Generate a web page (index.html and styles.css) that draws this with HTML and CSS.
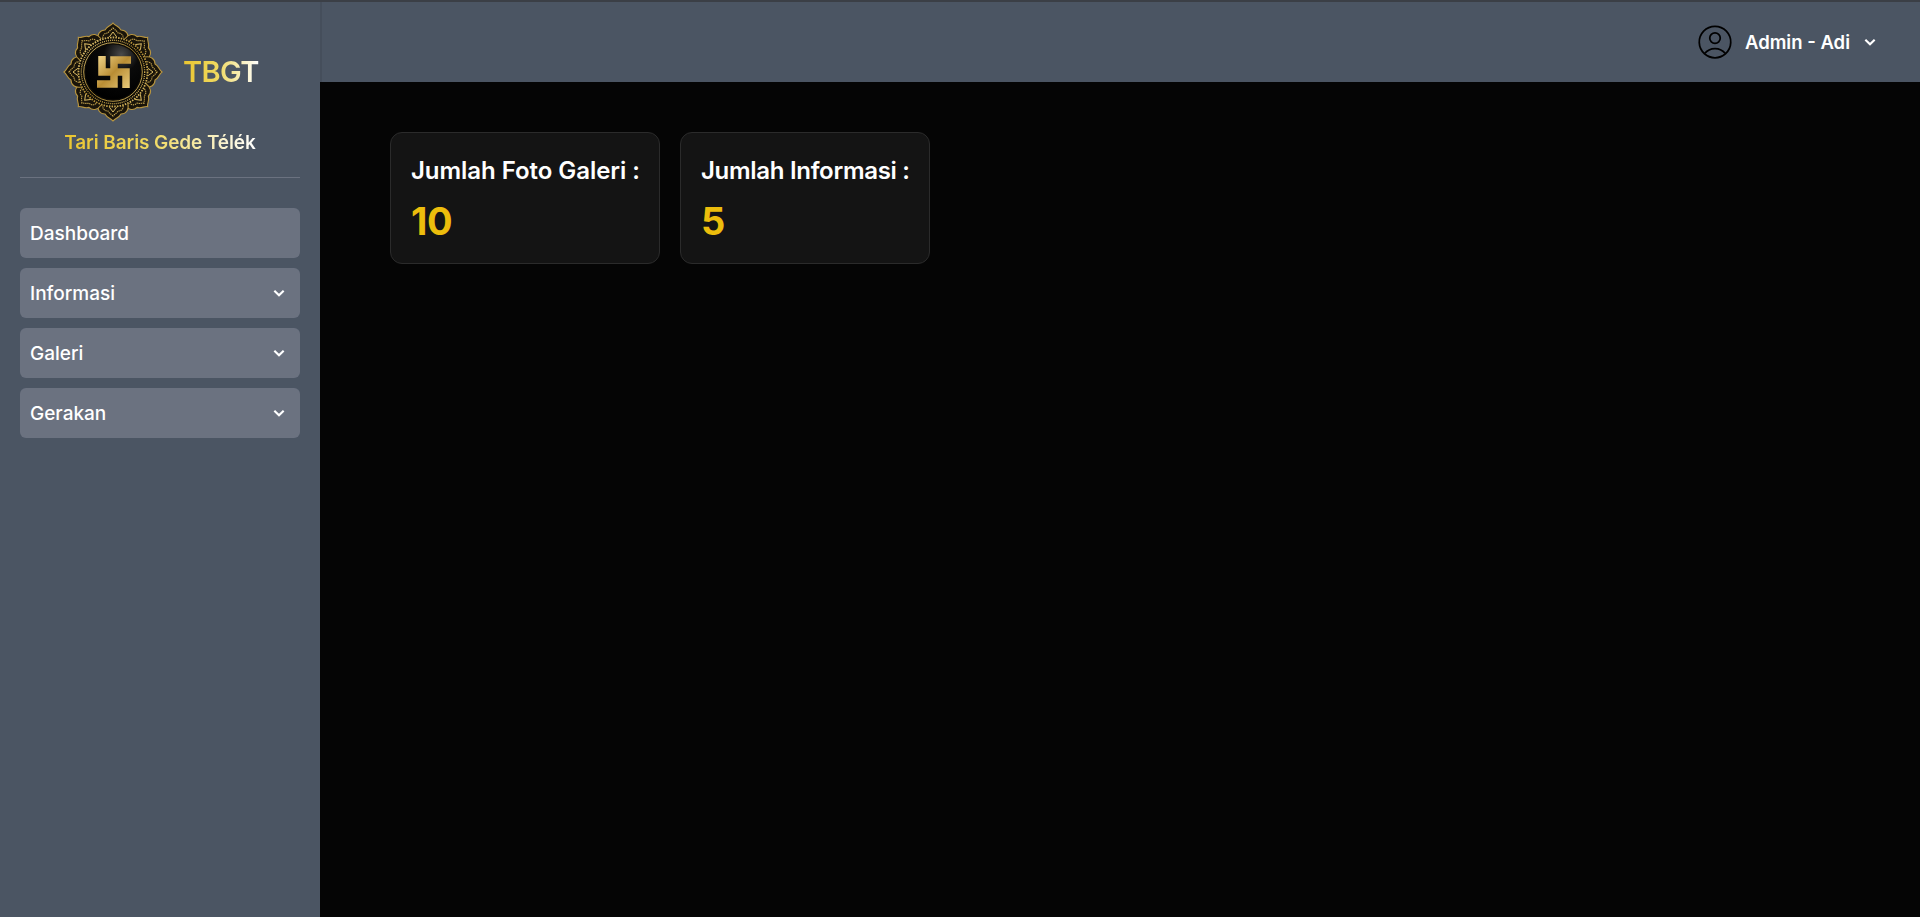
FILE: index.html
```html
<!DOCTYPE html>
<html lang="id">
<head>
<meta charset="utf-8">
<title>TBGT Admin</title>
<link rel="stylesheet" href="styles.css">
</head>
<body>
<div class="app">
  <aside class="sidebar">
    <div class="brand">
      <div class="brand-top">
        <svg class="logo" viewBox="0 0 100 100" aria-hidden="true">
          <defs>
            <linearGradient id="gold" x1="0" y1="0" x2="1" y2="1">
              <stop offset="0" stop-color="#e9cf7e"/>
              <stop offset="0.5" stop-color="#a9842f"/>
              <stop offset="1" stop-color="#e0c26a"/>
            </linearGradient>
            <linearGradient id="sw" gradientUnits="userSpaceOnUse" x1="35" y1="34" x2="67" y2="66">
              <stop offset="0" stop-color="#f0d488"/>
              <stop offset="0.5" stop-color="#b98d34"/>
              <stop offset="1" stop-color="#e8cb7c"/>
            </linearGradient>
            <radialGradient id="disc" cx="0.65" cy="0.18" r="0.8">
              <stop offset="0" stop-color="#4a4a4a"/>
              <stop offset="0.4" stop-color="#0a0a0a"/>
              <stop offset="1" stop-color="#000"/>
            </radialGradient>
            <g id="petal">
              <path d="M50 1 C52 4 56 4 58 8 C63 8 66 12 65 18 L50 32 L35 18 C34 12 37 8 42 8 C44 4 48 4 50 1Z" fill="#19140a" stroke="#b8953f" stroke-width="1.1"/>
              <path d="M50 6 C52 8 54 9 55 11 C59 11 61 14 60 18 L50 27 L40 18 C39 14 41 11 45 11 C46 9 48 8 50 6Z" fill="none" stroke="#c9a850" stroke-width="1.1" stroke-dasharray="1.3 0.8"/>
              <path d="M50 10 L54.500 16 L50 22 L45.500 16Z" fill="none" stroke="#dcbd66" stroke-width="1"/>
              <circle cx="50" cy="16" r="1.300" fill="#e4c774"/>
            </g>
          </defs>
          <use href="#petal"/>
          <use href="#petal" transform="rotate(45 50 50)"/>
          <use href="#petal" transform="rotate(90 50 50)"/>
          <use href="#petal" transform="rotate(135 50 50)"/>
          <use href="#petal" transform="rotate(180 50 50)"/>
          <use href="#petal" transform="rotate(225 50 50)"/>
          <use href="#petal" transform="rotate(270 50 50)"/>
          <use href="#petal" transform="rotate(315 50 50)"/>
          <circle cx="50" cy="50" r="35.500" fill="#0c0a05"/>
          <circle cx="50" cy="50" r="34.500" fill="none" stroke="url(#gold)" stroke-width="1.800" stroke-dasharray="1.600 1.100"/>
          <circle cx="50" cy="50" r="31.700" fill="none" stroke="url(#gold)" stroke-width="1.400" stroke-dasharray="1 1"/>
          <circle cx="50" cy="50" r="29.300" fill="none" stroke="url(#gold)" stroke-width="0.900"/>
          <circle cx="50" cy="50" r="27.500" fill="url(#disc)"/>
          <path d="M39 34 V50 H63 V66 M51 50 V38 H68 M51 50 V62 H34" fill="none" stroke="url(#sw)" stroke-width="7.500"/>
        </svg>
        <span class="brand-name">TBGT</span>
      </div>
      <div class="brand-full">Tari Baris Gede Télék</div>
    </div>
    <hr class="divider">
    <nav class="nav">
      <a class="nav-item">Dashboard</a>
      <a class="nav-item">Informasi
        <svg class="chev" viewBox="0 0 12 12" aria-hidden="true"><path d="M2 4 L6 8 L10 4"/></svg>
      </a>
      <a class="nav-item">Galeri
        <svg class="chev" viewBox="0 0 12 12" aria-hidden="true"><path d="M2 4 L6 8 L10 4"/></svg>
      </a>
      <a class="nav-item">Gerakan
        <svg class="chev" viewBox="0 0 12 12" aria-hidden="true"><path d="M2 4 L6 8 L10 4"/></svg>
      </a>
    </nav>
  </aside>
  <div class="content">
    <header class="topbar">
      <svg class="avatar" viewBox="0 0 24 24" aria-hidden="true"><path d="M17.982 18.725A7.488 7.488 0 0012 15.75a7.488 7.488 0 00-5.982 2.975m11.963 0a9 9 0 10-11.963 0m11.963 0A8.966 8.966 0 0112 21a8.966 8.966 0 01-5.982-2.275M15 9.75a3 3 0 11-6 0 3 3 0 016 0z"/></svg>
      <span class="user-name">Admin - Adi</span>
      <svg class="chev" viewBox="0 0 12 12" aria-hidden="true"><path d="M2 4 L6 8 L10 4"/></svg>
    </header>
    <main class="main">
      <section class="card card-wide">
        <h2 class="card-title">Jumlah Foto Galeri :</h2>
        <p class="card-value">10</p>
      </section>
      <section class="card card-narrow">
        <h2 class="card-title card-title-tight">Jumlah Informasi :</h2>
        <p class="card-value">5</p>
      </section>
    </main>
  </div>
</div>
</body>
</html>
```
FILE: styles.css
```css
* { box-sizing: border-box; }
html, body { margin: 0; height: 100%; }
body {
  font-family: Inter, "Liberation Sans", sans-serif;
  background: #050505;
  color: #fff;
  overflow: hidden;
}
.app {
  display: flex;
  height: 100vh;
  border-top: 2px solid #3b3f46;
}
.sidebar {
  width: 320px;
  flex: none;
  background: #4b5563;
  padding: 0 20px;
}
.brand {
  display: flex;
  flex-direction: column;
  align-items: center;
}
.brand-top {
  display: flex;
  align-items: center;
  gap: 20px;
  padding-top: 20px;
  padding-left: 2px;
  height: 120px;
}
.logo { width: 100px; height: 100px; flex: none; }
.brand-name, .brand-full {
  background: linear-gradient(90deg, #eac52f 0%, #f0d95f 45%, #ffffff 100%);
  -webkit-background-clip: text;
  background-clip: text;
  color: transparent;
  font-weight: 600;
}
.brand-name { font-size: 29px; line-height: 36px; letter-spacing: -0.6px; }
.brand-full { font-size: 19px; line-height: 28px; margin-top: 7px; letter-spacing: -0.1px; }
.divider {
  border: 0;
  height: 1px;
  background: #6b7280;
  margin: 20px 0 30px;
}
.nav { display: flex; flex-direction: column; gap: 10px; }
.nav-item {
  display: flex;
  align-items: center;
  justify-content: space-between;
  height: 50px;
  padding: 0 14px 0 10px;
  background: #6b7280;
  border-radius: 6px;
  font-size: 19px;
  font-weight: 450;
  color: #fff;
}
.chev { width: 14px; height: 14px; flex: none; }
.chev path { fill: none; stroke: #fff; stroke-width: 1.8; }
.content { flex: 1; display: flex; flex-direction: column; min-width: 0; }
.topbar {
  height: 80px;
  flex: none;
  background: #4b5563;
  border-left: 2px solid #454e5b;
  display: flex;
  align-items: center;
  justify-content: flex-end;
  padding-right: 43px;
}
.avatar { width: 42px; height: 42px; margin-right: 9px; }
.avatar path { fill: none; stroke: #000; stroke-width: 1; }
.user-name { font-size: 18.500px; font-weight: 600; margin-right: 13px; }
.main {
  flex: 1;
  padding: 50px 70px;
  display: flex;
  align-items: flex-start;
  gap: 20px;
}
.card {
  background: #141414;
  border: 1px solid #2b2b2b;
  border-radius: 12px;
  padding: 22px 20px 20px;
  height: 132px;
}
.card-wide { width: 270px; }
.card-narrow { width: 250px; }
.card-title {
  margin: 0;
  font-size: 24px;
  line-height: 32px;
  font-weight: 600;
  letter-spacing: -0.05px;
  white-space: nowrap;
}
.card-title-tight { letter-spacing: -0.3px; }
.card-value {
  margin: 14px 0 0;
  font-size: 38px;
  line-height: 40px;
  font-weight: 700;
  letter-spacing: -0.5px;
  color: #ecbd0c;
}
```
